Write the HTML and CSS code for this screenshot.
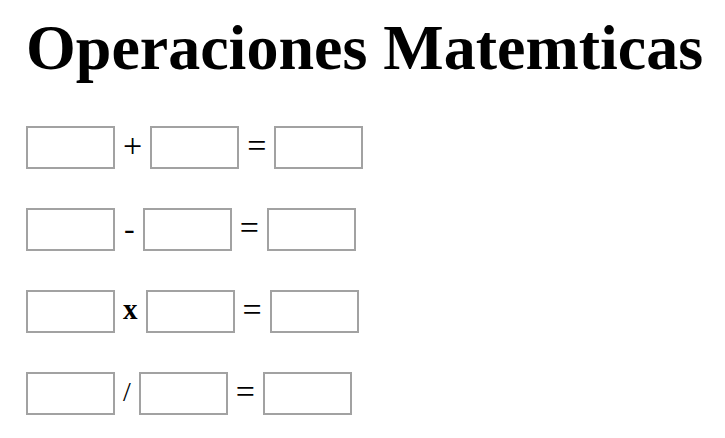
FILE: index.html
```html
<!DOCTYPE html>
<html lang="es">
<head>
<meta charset="utf-8">
<title>Operaciones Matemticas</title>
<link rel="stylesheet" href="styles.css">
</head>
<body>
<div class="page">
  <h1 class="title">Operaciones Matemticas</h1>
  <div class="rows">
    <div class="row">
      <input class="box" type="text">
      <span class="op op-plus">+</span>
      <input class="box" type="text">
      <span class="op op-eq">=</span>
      <input class="box" type="text">
    </div>
    <div class="row">
      <input class="box" type="text">
      <span class="op op-minus">-</span>
      <input class="box" type="text">
      <span class="op op-eq">=</span>
      <input class="box" type="text">
    </div>
    <div class="row">
      <input class="box" type="text">
      <span class="op op-times">x</span>
      <input class="box" type="text">
      <span class="op op-eq">=</span>
      <input class="box" type="text">
    </div>
    <div class="row">
      <input class="box" type="text">
      <span class="op op-div">/</span>
      <input class="box" type="text">
      <span class="op op-eq">=</span>
      <input class="box" type="text">
    </div>
  </div>
</div>
</body>
</html>
```

FILE: styles.css
```css
html, body {
  margin: 0;
  padding: 0;
  background: #ffffff;
}

.page {
  padding: 16px 0 0 26px;
  font-family: "Liberation Serif", "Times New Roman", serif;
  color: #000000;
}

.title {
  margin: 0;
  font-size: 64px;
  line-height: 1;
  font-weight: bold;
  white-space: nowrap;
}

.rows {
  display: flex;
  flex-direction: column;
  gap: 39px;
  margin-top: 46px;
}

.row {
  display: flex;
  align-items: center;
  gap: 8px;
  height: 43px;
}

.box {
  box-sizing: border-box;
  width: 89px;
  height: 43px;
  margin: 0;
  padding: 0;
  border: 2px solid #a2a2a2;
  background: #ffffff;
  outline: none;
}

.op {
  display: block;
  line-height: 1;
  margin-bottom: 4px;
}

.op-plus {
  font-size: 34px;
}

.op-eq {
  font-size: 34px;
}

.op-minus {
  font-size: 32px;
  margin-left: 1px;
}

.op-times {
  font-size: 29px;
  font-weight: bold;
}

.op-div {
  font-size: 28px;
}
```
